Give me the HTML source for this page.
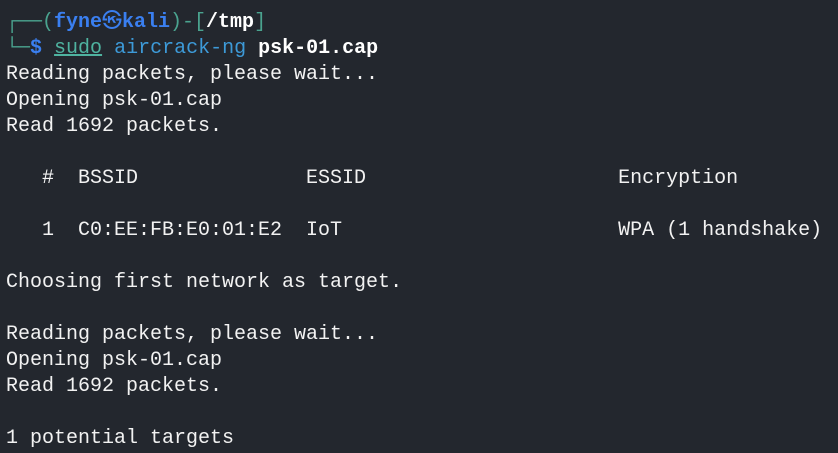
<!DOCTYPE html>
<html><head><meta charset="utf-8"><style>
html,body{margin:0;padding:0;background:#23272e;width:838px;height:453px;overflow:hidden}
pre{margin:0;padding:10px 0 0 6px;font-family:"Liberation Mono","DejaVu Sans Mono","Noto Sans CJK SC",monospace;font-size:20px;line-height:26px;color:#f2f2f2}
.t{color:#4aa38f}.b{color:#3a7ff0;font-weight:bold}.s{color:#4fb3a0;text-decoration:underline}.a{color:#3d9ad8}.w{color:#fff;font-weight:bold}
</style></head><body><pre><span class="t">┌──(</span><span class="b">fyne㉿kali</span><span class="t">)-[</span><span class="w">/tmp</span><span class="t">]</span>
<span class="t">└─</span><span class="b">$</span> <span class="s">sudo</span> <span class="a">aircrack-ng</span> <span class="w">psk-01.cap</span>
Reading packets, please wait...
Opening psk-01.cap
Read 1692 packets.

   #  BSSID              ESSID                     Encryption

   1  C0:EE:FB:E0:01:E2  IoT                       WPA (1 handshake)

Choosing first network as target.

Reading packets, please wait...
Opening psk-01.cap
Read 1692 packets.

1 potential targets</pre></body></html>
